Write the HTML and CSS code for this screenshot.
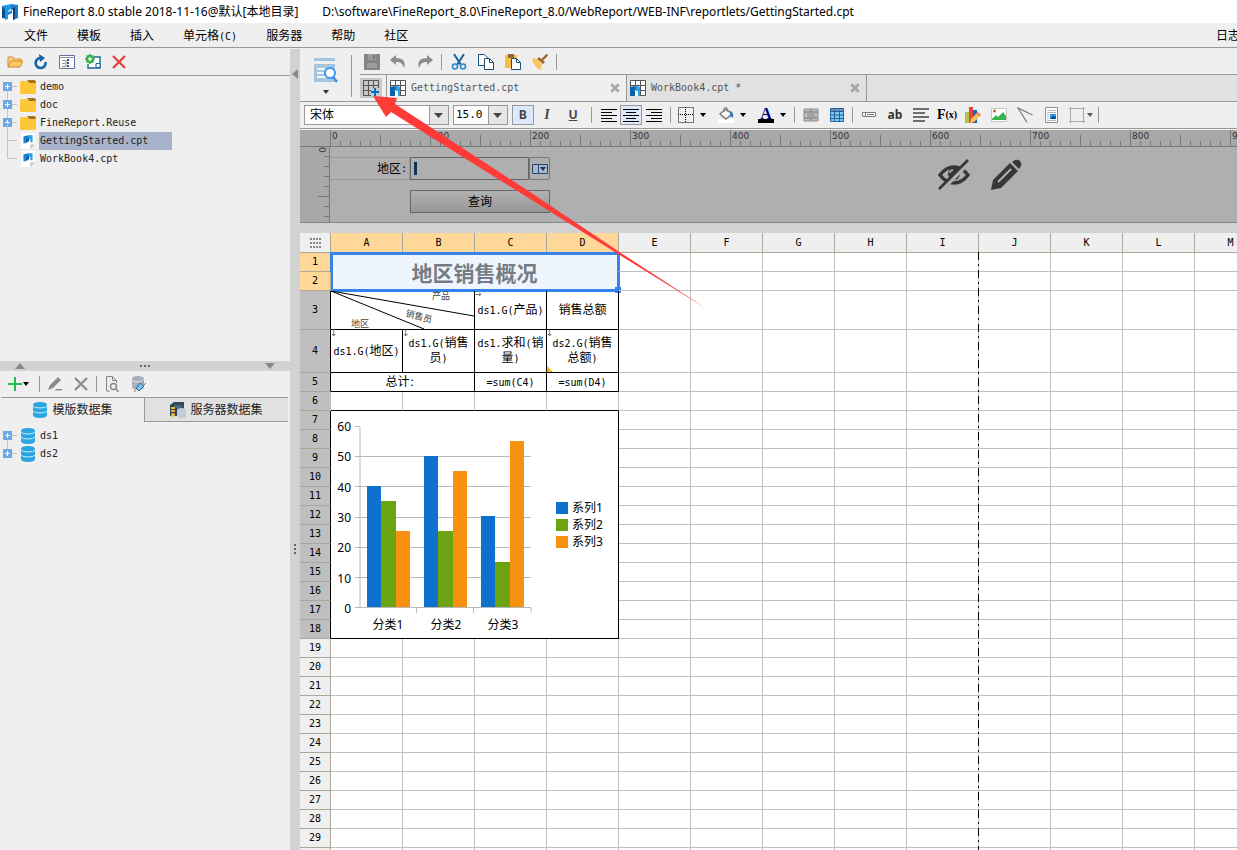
FILE: index.html
```html
<!DOCTYPE html>
<html lang="zh-CN">
<head>
<meta charset="utf-8">
<title>FineReport 8.0</title>
<link rel="stylesheet" href="styles.css">
</head>
<body>
<svg class="defs" aria-hidden="true">
  <defs>
    <symbol id="logo" viewBox="0 0 16 16"><path d="M0 2l6 1v12l-6-1z" fill="#0b4f92"/><path d="M0 2L9 0v5L6 7v8l-3 1V6z" fill="#2196e6"/><path d="M6 8l4-2v3l-4 2z" fill="#1a86d8"/><path d="M9 0l7 1v13l-5 2V5H9z" fill="#1c7fd0"/><path d="M9 5l4-2v12l-2 1V6z" fill="#0c4278"/></symbol>
    <symbol id="folder" viewBox="0 0 16 14"><path d="M0 2q0-1 1-1h6l2 2h7v10q0 1-1 1H1q-1 0-1-1z" fill="#ffc737"/><path d="M7 0h7q2 0 2 3H9z" fill="#a8741a"/></symbol>
    <symbol id="cpt" viewBox="0 0 12 14"><path d="M0 0h12v10l-4 4H0z" fill="#fff"/><path d="M8 14v-4h4z" fill="#c4c4c4"/><path d="M2 3l4-1v3L4 6v3H2z" fill="#1580d0"/><path d="M6 2h4v6H8V5H6z" fill="#2aa0e8"/><path d="M4 6l3-2v3L4 9z" fill="#0a58a0"/></symbol>
    <symbol id="db" viewBox="0 0 16 16"><path d="M1 3q0-3 7-3t7 3v10q0 3-7 3t-7-3z" fill="#29a5e0"/><path d="M1 4q1 2 7 2t7-2M1 9q1 2 7 2t7-2" fill="none" stroke="#c9ecfb"/></symbol>
    <symbol id="book" viewBox="0 0 16 16"><path d="M.5.5h15v15H.5z" fill="#fff" stroke="#555"/><path d="M5.500.5v6M10.500.5v15M.5 5.500h15M10 10.500h5" stroke="#555"/><path d="M0 7l5-1h3v4H5v6H0z" fill="#0b63ab"/><path d="M4 6h4q2 0 2 2v8H8v-5H6V8z" fill="#31a4df"/><path d="M5 11h3v5H5z" fill="#fff"/></symbol>
    <symbol id="close" viewBox="0 0 8 8"><path d="M1 1l6 6M7 1L1 7" stroke="#a6a6a6" stroke-width="2"/></symbol>
    <symbol id="down" viewBox="0 0 6 4"><path d="M0 0h6L3 4z"/></symbol>
  </defs>
</svg>

<header class="titlebar">
  <svg class="i16"><use href="#logo"/></svg>
  <span class="title">FineReport 8.0 stable 2018-11-16@默认[本地目录]</span>
  <span class="path">D:\software\FineReport_8.0\FineReport_8.0/WebReport/WEB-INF\reportlets/GettingStarted.cpt</span>
</header>
<nav class="menubar">
  <a href="#">文件</a><a href="#">模板</a><a href="#">插入</a><a href="#">单元格<span class="lat">(C)</span></a><a href="#">服务器</a><a href="#">帮助</a><a href="#">社区</a><a href="#" class="log">日志</a>
</nav>

<main class="workspace">
  <aside class="side">
    <div class="sidebar-tools" role="toolbar">
      <button aria-label="打开"><svg class="i16" viewBox="0 0 16 16"><path d="M1 13V3h5l1 2h7v2" fill="#fbd27c" stroke="#d28a2c"/><path d="M1 13l3-6h12l-3 6z" fill="#fcc765" stroke="#d28a2c"/></svg></button>
      <button aria-label="刷新"><svg class="i16" viewBox="0 0 16 16"><path d="M12.500 8a5 5 0 1 1-5-4" fill="none" stroke="#1263a8" stroke-width="2.600"/><path d="M6 0l6 4-5 4z" fill="#1263a8"/></svg></button>
      <button aria-label="目录"><svg class="i16" viewBox="0 0 16 16"><path d="M.5 1.500h15v13H.5z" fill="#fff" stroke="#6a6aa8"/><path d="M0 3.500h16" stroke="#8c8cc0"/><path d="M3 6.500h3M3 9.500h3M3 12.500h3M7 6v7" stroke="#888"/><path d="M8 5h2v2H8zM8 8h2v2H8zM8 11h2v2H8z" fill="#235a9a"/></svg></button>
      <button aria-label="设置"><svg class="i16" viewBox="0 0 16 16"><path d="M9 3h6v11H3v-4" fill="#fff" stroke="#176a98" stroke-width="1.400"/><path d="M11 9.500h4v4h-4z" fill="#fff" stroke="#176a98"/><circle cx="5" cy="5" r="3" fill="#fff" stroke="#39b24a" stroke-width="2.600"/><path d="M5 0v2M5 8v2M0 5h2M8 5h2M1.500 1.500L3 3M7 7l1.500 1.500M8.500 1.500L7 3M3 7L1.500 8.500" stroke="#39b24a" stroke-width="1.600"/></svg></button>
      <button aria-label="删除"><svg class="i16" viewBox="0 0 16 16"><path d="M2 2l12 12M14 2L2 14" stroke="#e8453c" stroke-width="2.400"/></svg></button>
    </div>
    <ul class="tree files">
      <li><i class="plus"></i><svg class="i16"><use href="#folder"/></svg><span class="lat">demo</span></li>
      <li><i class="plus"></i><svg class="i16"><use href="#folder"/></svg><span class="lat">doc</span></li>
      <li><i class="plus"></i><svg class="i16"><use href="#folder"/></svg><span class="lat">FineReport.Reuse</span></li>
      <li><i class="twig"></i><svg class="i16"><use href="#cpt"/></svg><span class="lat picked">GettingStarted.cpt</span></li>
      <li><i class="twig"></i><svg class="i16"><use href="#cpt"/></svg><span class="lat">WorkBook4.cpt</span></li>
    </ul>
    <div class="hsplit">
      <svg class="grip" viewBox="0 0 10 6"><path d="M0 6h10L5 0z" fill="#888"/></svg>
      <svg class="grip" viewBox="0 0 10 6"><path d="M0 2h2v2H0zM4 2h2v2H4zM8 2h2v2H8z" fill="#666"/></svg>
      <svg class="grip" viewBox="0 0 10 6"><path d="M0 0h10L5 6z" fill="#888"/></svg>
    </div>
    <div class="data-tools" role="toolbar">
      <button class="add" aria-label="新增"><svg class="i16" viewBox="0 0 16 16"><path d="M8 1v14M1 8h14" stroke="#1fbf53" stroke-width="2"/></svg><svg class="caret"><use href="#down"/></svg></button>
      <span class="sep"></span>
      <button aria-label="编辑"><svg class="i16" viewBox="0 0 16 16"><path d="M1 14l2-5 8-8 3 3-8 8zM9 13h6v1.500H8z" fill="#8c8c8c"/></svg></button>
      <button aria-label="移除"><svg class="i16" viewBox="0 0 16 16"><path d="M2 2l12 12M14 2L2 14" stroke="#8c8c8c" stroke-width="2.400"/></svg></button>
      <span class="sep"></span>
      <button aria-label="预览数据"><svg class="i16" viewBox="0 0 16 16"><path d="M6 15H2.500V.5h6l4 4V7M8.500.5v4h4" fill="none" stroke="#858585"/><circle cx="9.500" cy="10.500" r="3" fill="none" stroke="#858585" stroke-width="1.400"/><path d="M12 13l2.500 3" stroke="#858585" stroke-width="1.600"/></svg></button>
      <button aria-label="连接"><svg class="i16" viewBox="0 0 16 16"><path d="M2 3q0-3 6-3t6 3v8q0 3-6 3t-6-3z" fill="#a9b2ba"/><path d="M2 4q1 2 6 2t6-2" fill="none" stroke="#dde2e6"/><path d="M6 12l4-5 4 3-5 5z" fill="#7fc0ea" stroke="#2e6ea6"/><path d="M12 7l2-2M14 9l2-2M6 14l-2 2" stroke="#777"/></svg></button>
    </div>
    <div class="data-tabs" role="tablist">
      <button role="tab" aria-selected="true"><svg class="i16"><use href="#db"/></svg>模版数据集</button>
      <button role="tab" aria-selected="false"><svg class="i16" viewBox="0 0 16 16"><path d="M0 3l4-3h10v14H0z" fill="#31485a"/><path d="M4 3h8v3H4z" fill="#466680"/><path d="M1 5h4v2H1zM1 8h4v2H1z" fill="#f2b632"/><circle cx="3" cy="13" r="2" fill="#f2b632"/><path d="M7 8q0-2 4.500-2T16 8v6q0 2-4.500 2T7 14z" fill="#c3ccd4"/></svg>服务器数据集</button>
    </div>
    <ul class="tree sets">
      <li><i class="plus"></i><svg class="i16"><use href="#db"/></svg><span class="lat">ds1</span></li>
      <li><i class="plus"></i><svg class="i16"><use href="#db"/></svg><span class="lat">ds2</span></li>
    </ul>
  </aside>

  <div class="vsplit">
    <svg class="fold" viewBox="0 0 6 10"><path d="M6 0v10L0 5z" fill="#888"/></svg>
    <svg class="dots" viewBox="0 0 2 10"><path d="M0 0h2v2H0zM0 4h2v2H0zM0 8h2v2H0z" fill="#666"/></svg>
  </div>

  <section class="editor">
    <div class="top">
      <button class="preview" aria-label="预览">
        <svg class="i24" viewBox="0 0 24 24"><path d="M0 0h21v3H0zM0 6h21v18H0z" fill="#a5c4de"/><path d="M3 11h8M3 15h7M3 19h10" stroke="#f2f6fa" stroke-width="2"/><circle cx="16" cy="15" r="5" fill="#fff" stroke="#3e97ee" stroke-width="2"/><path d="M19 19l4 5" stroke="#3e97ee" stroke-width="2.600"/></svg>
        <svg class="caret"><use href="#down"/></svg>
      </button>
      <div class="top-main">
        <div class="actions" role="toolbar">
          <button aria-label="保存"><svg class="i16" viewBox="0 0 16 16"><path d="M0 1q0-1 1-1h14q1 0 1 1v14q0 1-1 1H1q-1 0-1-1z" fill="#858585"/><path d="M4 0h8v6H4z" fill="#9d9d9d"/><path d="M9 1h2v4H9z" fill="#707070"/><path d="M3 9h10v5H3z" fill="#9d9d9d"/></svg></button>
          <button aria-label="撤销"><svg class="i16" viewBox="0 0 16 16"><path d="M6 1L0 6l6 5V8q6-1 8 6 3-10-8-10z" fill="#8c8c8c"/></svg></button>
          <button aria-label="重做"><svg class="i16" viewBox="0 0 16 16"><path d="M10 1l6 5-6 5V8q-6-1-8 6-3-10 8-10z" fill="#8c8c8c"/></svg></button>
          <span class="sep"></span>
          <button aria-label="剪切"><svg class="i16" viewBox="0 0 16 16"><path d="M3 0l7 11M13 0L6 11" stroke="#16609c" stroke-width="2"/><circle cx="4" cy="12.500" r="2.500" fill="none" stroke="#2c8ac8" stroke-width="1.600"/><circle cx="12" cy="12.500" r="2.500" fill="none" stroke="#2c8ac8" stroke-width="1.600"/></svg></button>
          <button aria-label="复制"><svg class="i16" viewBox="0 0 16 16"><path d="M.5.5h6l3 3v8h-9z" fill="#fff" stroke="#1c4f78"/><path d="M6.500 4.500h5l4 4v7h-9z" fill="#fff" stroke="#1c4f78"/><path d="M11.500 4.500v4h4" fill="none" stroke="#1c4f78"/></svg></button>
          <button aria-label="粘贴"><svg class="i16" viewBox="0 0 16 16"><path d="M0 1h12v13H0z" fill="#f5bd49"/><path d="M3 0h6v4H3z" fill="#8b6a38"/><path d="M6.500 4.500h5l4 4v7h-9z" fill="#fff" stroke="#1c4f78"/><path d="M11.500 4.500v4h4" fill="none" stroke="#1c4f78"/></svg></button>
          <button aria-label="格式刷"><svg class="i16" viewBox="0 0 16 16"><path d="M15.500.5L10 6" stroke="#9b6534" stroke-width="2.400"/><path d="M7 3l6 5-2 2-6-5z" fill="#9b6534"/><path d="M0 4l5 1 5 5-1 6q-7-2-9-12z" fill="#fdc55e"/></svg></button>
          <span class="sep"></span>
        </div>
        <div class="filebar">
          <button class="new" aria-label="新建"><svg class="i16" viewBox="0 0 16 16"><path d="M.5.5h15v15H.5zM5.500 0v16M10.500 0v16M0 5.500h16M0 10.500h16" fill="none" stroke="#555"/><path d="M8 8h8v8H8z" fill="#c8c8c8"/><path d="M12 8v8M8 12h8" stroke="#0c6fbe" stroke-width="2"/></svg></button>
          <div class="file active"><svg class="i16"><use href="#book"/></svg><span class="lat">GettingStarted.cpt</span><button aria-label="关闭"><svg class="i8"><use href="#close"/></svg></button></div>
          <div class="file"><svg class="i16"><use href="#book"/></svg><span class="lat">WorkBook4.cpt *</span><button aria-label="关闭"><svg class="i8"><use href="#close"/></svg></button></div>
          <div class="file-rest"></div>
        </div>
      </div>
    </div>

    <div class="format" role="toolbar">
      <select class="face" aria-label="字体"><option>宋体</option></select>
      <select class="size" aria-label="字号"><option>15.0</option></select>
      <button class="on bold" aria-label="加粗">B</button>
      <button class="wide italic" aria-label="斜体">I</button>
      <button class="wide under" aria-label="下划线">U</button>
      <span class="sep"></span>
      <button aria-label="左对齐"><svg class="i16" viewBox="0 0 16 16"><path d="M0 2.500h16M0 5.500h11M0 8.500h16M0 11.500h11M0 14.500h16" stroke="#000"/></svg></button>
      <button class="on" aria-label="居中"><svg class="i16" viewBox="0 0 16 16"><path d="M0 2.500h16M3 5.500h10M0 8.500h16M3 11.500h10M0 14.500h16" stroke="#000"/></svg></button>
      <button aria-label="右对齐"><svg class="i16" viewBox="0 0 16 16"><path d="M0 2.500h16M5 5.500h11M0 8.500h16M5 11.500h11M0 14.500h16" stroke="#000"/></svg></button>
      <span class="sep"></span>
      <button class="split" aria-label="边框"><svg class="i16" viewBox="0 0 16 16"><path d="M.5.5h15v15H.5zM7.500 0v16M0 7.500h16" fill="none" stroke="#000" stroke-dasharray="1 1"/></svg><svg class="caret"><use href="#down"/></svg></button>
      <button class="split" aria-label="填充"><svg class="i16" viewBox="0 0 16 16"><path d="M0 12h16v4H0z" fill="#fff"/><path d="M2 7l6-5 6 5-6 5z" fill="#fff" stroke="#777" stroke-width="1.400"/><path d="M6 5V1q2-2 3 0v4" fill="none" stroke="#777"/><path d="M12 4q4 1 3 7l-3-2z" fill="#3a78b5"/></svg><svg class="caret"><use href="#down"/></svg></button>
      <button class="split ink-color" aria-label="字体颜色"><span class="glyph">A</span><svg class="caret"><use href="#down"/></svg></button>
      <span class="sep tight"></span>
      <button class="wide" aria-label="合并单元格"><svg class="i16" viewBox="0 0 16 16"><path d="M1 2h14v12H1z" fill="#bdbdbd" stroke="#8e8e8e"/><path d="M1 5h14M1 11h14M8 2v3M8 11v3" stroke="#777"/><path d="M4 6h8v4H4z" fill="#a5a5a5"/></svg></button>
      <button class="wide" aria-label="拆分单元格"><svg class="i16" viewBox="0 0 16 16"><path d="M1.500 1.500h13v13h-13z" fill="#7cc9f4" stroke="#22639c"/><path d="M2 2h12v2H2z" fill="#6f91b5"/><path d="M1 4.500h14M1 8h14M1 11.500h14M5.500 3v12M10.500 3v12" stroke="#22639c"/></svg></button>
      <span class="sep tight"></span>
      <button class="wide" aria-label="控件"><svg class="i16" viewBox="0 0 16 16"><path d="M1.500 5.500h13v4h-13z" fill="#fff" stroke="#777"/><path d="M6 7.500h7M4.500 6v3" stroke="#777"/></svg></button>
      <button class="wide ab" aria-label="文本">ab</button>
      <button class="wide" aria-label="富文本"><svg class="i16" viewBox="0 0 16 16"><path d="M0 2h16M0 6h12M0 10h16M0 14h12" stroke="#444" stroke-width="1.600"/></svg></button>
      <button class="wide fx" aria-label="公式">F<small>(x)</small></button>
      <button class="wide" aria-label="图表"><svg class="i16" viewBox="0 0 16 16"><path d="M0 5h4v11H0z" fill="#a9c84a"/><path d="M4 0h4v16H4z" fill="#e8453c"/><path d="M8 3h4v13H8z" fill="#1566ae"/><path d="M6 12l7-7 3 3-7 7-4 1z" fill="#fcc25a"/><path d="M13 5l3 3-2 1-3-2z" fill="#ef7b67"/></svg></button>
      <button class="wide" aria-label="图片"><svg class="i16" viewBox="0 0 16 16"><path d="M.5 1.500h15v13H.5z" fill="#fff" stroke="#c6c6c6"/><path d="M1 12l4-4 2 2 5-5 3 4v4H1z" fill="#37b34f"/><path d="M2 4h3M3.500 2.500v3" stroke="#e34b31" stroke-width="1.400"/></svg></button>
      <button class="wide" aria-label="斜线"><svg class="i16" viewBox="0 0 16 16"><path d="M15.500 8L1 1l9 14.500" fill="none" stroke="#777" stroke-width="1.200"/></svg></button>
      <button class="wide" aria-label="子报表"><svg class="i16" viewBox="0 0 16 16"><path d="M2.500.5h12v15h-12z" fill="#fff" stroke="#8f8f8f"/><path d="M4 3.500h9M4 5.500h9M4 7.500h2M4 9.500h2M4 11.500h2M4 13.500h9" stroke="#b9b9b9"/><path d="M7 7h6v5H7z" fill="#2b93e8"/><path d="M7 12l3-3 3 1v2z" fill="#0b4d94"/></svg></button>
      <button class="last" aria-label="悬浮元素"><svg class="i16" viewBox="0 0 16 16"><path d="M1.500 0v16M14.500 0v16M0 1.500h16M0 14.500h16" stroke="#a9a9a9"/></svg><svg class="caret"><use href="#down"/></svg></button>
      <span class="sep tight"></span>
    </div>

    <div class="params">
      <div class="ruler">
        <span>0</span><span>100</span><span>200</span><span>300</span><span>400</span><span>500</span><span>600</span><span>700</span><span>800</span><span>900</span>
      </div>
      <div class="vruler"><span>0</span></div>
      <form class="query">
        <label for="area">地区<span class="lat">:</span></label>
        <div class="combo"><input id="area" type="text"><button type="button" aria-label="展开"><svg class="drop" viewBox="0 0 16 10"><path d="M.5.5h15v9H.5z" fill="#aab8cc" stroke="#2c4470"/><path d="M6.500.5v9" stroke="#2c4470"/><path d="M8 3h6l-3 4z" fill="#1c3568"/></svg></button></div>
        <button type="button" class="search">查询</button>
      </form>
      <div class="param-icons">
        <button aria-label="隐藏"><svg class="i32" viewBox="0 0 32 32"><path d="M2 16q6-8 14-8t14 8q-6 8-14 8T2 16z" fill="none" stroke="#3a3636" stroke-width="3.400"/><circle cx="16" cy="15" r="6" fill="#3a3636"/><path d="M12 14q0-3 3-3" fill="none" stroke="#afafaf" stroke-width="1.600"/><path d="M3 31L31 3" stroke="#afafaf" stroke-width="5"/><path d="M1 30L30 1" stroke="#3a3636" stroke-width="2.600"/></svg></button>
        <button aria-label="编辑"><svg class="i32" viewBox="0 0 32 32"><path d="M1 31l2-10L20 4l8 8-17 17zM22 3l3-2q3-1 5 1t1 5l-2 3z" fill="#3a3636"/><path d="M8 23L21 10" stroke="#afafaf" stroke-width="2"/></svg></button>
      </div>
    </div>

    <div class="sheet">
      <table>
        <colgroup><col class="num"><col span="13"></colgroup>
        <thead><tr><th aria-label="全选"><svg class="corner" viewBox="0 0 11 10"><path d="M0 0h2v2H0zM3 0h2v2H3zM6 0h2v2H6zM9 0h2v2H9zM0 4h2v2H0zM3 4h2v2H3zM6 4h2v2H6zM9 4h2v2H9zM0 8h2v2H0zM3 8h2v2H3zM6 8h2v2H6zM9 8h2v2H9z" fill="#888"/></svg></th><th class="hot">A</th><th class="hot">B</th><th class="hot">C</th><th class="hot">D</th><th>E</th><th>F</th><th>G</th><th>H</th><th>I</th><th>J</th><th>K</th><th>L</th><th>M</th></tr></thead>
        <tbody id="rows">
          <tr data-blank="9"><th class="hot">1</th><td class="headline" colspan="4" rowspan="2">地区销售概况<i class="select-box"></i></td></tr>
          <tr data-blank="9"><th class="hot">2</th></tr>
          <tr class="r3" data-blank="9"><th class="used">3</th>
            <td class="ink diag" colspan="2"><svg viewBox="0 0 143 38"><path d="M0 0l143 25M0 0l93 38" stroke="#000"/><text x="101" y="8">产品</text><text x="74" y="25" transform="rotate(15 74 25)">销售员</text><text x="20" y="36">地区</text></svg></td>
            <td class="ink"><i class="mark">→</i><span class="lat">ds1.G(</span>产品<span class="lat">)</span></td><td class="ink">销售总额</td></tr>
          <tr class="r4" data-blank="9"><th class="used">4</th>
            <td class="ink"><i class="mark">↓</i><span class="lat">ds1.G(</span>地区<span class="lat">)</span></td>
            <td class="ink"><i class="mark">↓</i><span class="lat">ds1.G(</span>销售<br>员<span class="lat">)</span></td>
            <td class="ink"><span class="lat">ds1.</span>求和<span class="lat">(</span>销<br>量<span class="lat">)</span></td>
            <td class="ink flag"><i class="mark">↓</i><span class="lat">ds2.G(</span>销售<br>总额<span class="lat">)</span></td></tr>
          <tr data-blank="9"><th class="used">5</th><td class="ink" colspan="2">总计<span class="lat">：</span></td><td class="ink"><span class="lat">=sum(C4)</span></td><td class="ink"><span class="lat">=sum(D4)</span></td></tr>
          <tr class="r6" data-blank="13"><th class="used">6</th></tr>
          <tr data-blank="9"><th class="used">7</th>
            <td class="ink chart" colspan="4" rowspan="12">
              <svg viewBox="0 0 287 227" role="img" aria-label="柱形图">
                <path d="M28 45.500h172M28 75.500h172M28 106.500h172M28 136.500h172M28 166.500h172M24 15.500h5v181M24 45.500h5M24 75.500h5M24 106.500h5M24 136.500h5M24 166.500h5M24 196.500h176v5M85.500 197v5M142.500 197v5" fill="none" stroke="#b8b8b8"/>
                <g fill="#0e71cd"><path d="M36 75h14v121H36zM93 45h14v151H93zM150 105h14v91h-14z"/></g>
                <g fill="#6ca411"><path d="M50 90h15v106H50zM107 120h15v76h-15zM164 151h15v45h-15z"/></g>
                <g fill="#f6920f"><path d="M65 120h14v76H65zM122 60h14v136h-14zM179 30h14v166h-14z"/></g>
                <g text-anchor="end"><text x="20" y="20">60</text><text x="20" y="50">50</text><text x="20" y="81">40</text><text x="20" y="111">30</text><text x="20" y="141">20</text><text x="20" y="172">10</text><text x="20" y="202">0</text></g>
                <g text-anchor="middle"><text x="57" y="218">分类1</text><text x="115" y="218">分类2</text><text x="172" y="218">分类3</text></g>
                <path d="M225 91h12v12h-12z" fill="#0e71cd"/><path d="M225 108h12v12h-12z" fill="#6ca411"/><path d="M225 125h12v12h-12z" fill="#f6920f"/>
                <text x="241" y="101">系列1</text><text x="241" y="118">系列2</text><text x="241" y="135">系列3</text>
              </svg>
            </td></tr>
        </tbody>
      </table>
      <div class="page-edge"></div>
    </div>
  </section>
</main>

<svg class="pointer" viewBox="0 0 335 215" aria-hidden="true"><path d="M0 1l24 2-2 6 135 88 88 59 89 58-89-55-88-55L18 17l-5 5z" fill="#ff3b38"/></svg>
<script src="sheet.js"></script>
</body>
</html>
```
FILE: styles.css
```css
* { box-sizing: border-box; }
body {
  margin: 0;
  height: 100vh;
  display: flex;
  flex-direction: column;
  overflow: hidden;
  position: relative;
  background: #efefef;
  color: #000;
  font: 12px/16px "Liberation Sans", "Noto Sans CJK SC", sans-serif;
}
button, input, select { font: inherit; color: inherit; margin: 0; padding: 0; border: 0; background: none; border-radius: 0; }
button { display: flex; align-items: center; justify-content: center; }
svg { display: block; flex: none; }
i { font-style: normal; }
a { color: inherit; text-decoration: none; }
.defs { position: absolute; width: 0; height: 0; }
.lat { font: 10px/12px "DejaVu Sans Mono", "Noto Sans CJK SC", monospace; }
.i8 { width: 10px; height: 10px; }
.i16 { width: 16px; height: 16px; }
.i24 { width: 24px; height: 26px; }
.i32 { width: 32px; height: 32px; }
.caret { width: 6px; height: 4px; }
.sep { flex: none; width: 1px; height: 16px; background: #999; margin: 0 5px; }
.sep.tight { margin: 0 3px 0 2px; }

.titlebar { flex: none; height: 23px; display: flex; align-items: center; padding: 0 2px; background: #fff; font: 12px/16px "Noto Sans", "Noto Sans CJK SC", sans-serif; white-space: nowrap; }
.title { margin: 0 24px 0 5px; }
.menubar { flex: none; height: 25px; display: flex; align-items: center; gap: 29px; margin-bottom: 1px; padding: 2px 0 0 24px; border-bottom: 1px solid #999; }
.menubar a { white-space: nowrap; }
.menubar .log { margin: 0 -3px 0 auto; }

.workspace { flex: 1; min-height: 0; display: flex; }
.side { flex: none; width: 290px; display: flex; flex-direction: column; }
.sidebar-tools { flex: none; height: 27px; display: flex; align-items: center; padding-left: 2px; border-bottom: 1px solid #999; }
.sidebar-tools button { width: 26px; height: 24px; }
.tree { list-style: none; margin: 0; padding: 2px 0 0; }
.files { flex: none; height: 285px; }
.tree li { position: relative; height: 18px; display: flex; align-items: center; padding-left: 20px; color: #222; }
.tree li .lat { margin-left: 3px; line-height: 18px; padding: 0 24px 0 1px; }
.tree .picked { background: #a8b4cb; }
.plus, .twig { position: absolute; left: 3px; top: 4px; width: 9px; height: 9px; }
.plus { background: linear-gradient(#fff, #fff) center / 5px 1px no-repeat, linear-gradient(#fff, #fff) center / 1px 5px no-repeat, #6fa9e3; }
.plus::after, .twig::after { content: ""; position: absolute; left: 9px; top: 4px; width: 5px; height: 1px; background: #c9c4b4; }
.twig::after { left: 4px; width: 10px; }
.plus::before, .twig::before { content: ""; position: absolute; left: 4px; top: -9px; width: 1px; height: 9px; background: #c9c4b4; }
.twig::before { top: -13px; height: 18px; }
.tree li:first-child .plus::before { display: none; }
.hsplit { flex: none; height: 10px; display: flex; align-items: center; justify-content: space-between; padding: 0 15px; background: #d2d2d2; }
.grip { width: 10px; height: 6px; }
.data-tools { flex: none; height: 26px; display: flex; align-items: center; padding-left: 7px; }
.data-tools button { width: 26px; height: 24px; }
.data-tools .add { width: 30px; justify-content: flex-start; }
.data-tools .sep { margin: 0 2px; }
.data-tabs { flex: none; height: 25px; display: flex; margin: 0 2px 0 1px; border-top: 1px solid #999; }
.data-tabs button { flex: 1; gap: 4px; color: #222; }
.data-tabs button + button { background: #e1e1e1; border: solid #999; border-width: 0 0 1px 1px; }
.sets { padding-top: 5px; }

.vsplit { flex: none; width: 10px; display: flex; flex-direction: column; align-items: center; background: #d2d2d2; }
.fold { width: 6px; height: 10px; margin-top: 20px; }
.dots { width: 2px; height: 10px; margin-top: 465px; }

.editor { flex: 1; min-width: 0; display: flex; flex-direction: column; }
.top { flex: none; height: 53px; display: flex; border-bottom: 1px solid #999; }
.preview { position: relative; width: 52px; flex-direction: column; gap: 7px; }
.preview::after { content: ""; position: absolute; right: 0; top: 6px; bottom: 4px; width: 1px; background: #999; }
.preview .caret { fill: #333; }
.top-main { flex: 1; min-width: 0; display: flex; flex-direction: column; margin-left: 8px; }
.actions { height: 26px; display: flex; align-items: center; border-bottom: 1px solid #999; }
.actions button { width: 27px; height: 24px; }
.actions button:first-child { width: 24px; }
.actions .sep { margin: 0 3px; }
.filebar { flex: 1; display: flex; align-items: stretch; }
.new { width: 22px; height: 20px; margin: 3px 4px 0 0; background: #c8c8c8; }
.file { flex: none; width: 240px; display: flex; align-items: center; padding: 0 6px 0 3px; background: #e1e1e1; border-left: 1px solid #999; }
.file.active { background: #efefef; }
.file .lat { flex: 1; margin-left: 5px; color: #555; }
.file-rest { flex: 1; background: #e1e1e1; border-left: 1px solid #999; }

.format { flex: none; height: 27px; display: flex; align-items: center; padding-left: 4px; border-bottom: 1px solid #999; }
.format select { flex: none; height: 20px; margin-right: 4px; padding-left: 5px; border: 1px solid #999; appearance: none;
  background: #fff url("data:image/svg+xml,%3Csvg xmlns='http://www.w3.org/2000/svg' width='19' height='18'%3E%3Cpath d='M0 0h19v18H0z' fill='%23e6e6e6'/%3E%3Cpath d='M.5 0v18' stroke='%23999'/%3E%3Cpath d='M5 7h9l-4.500 5z' fill='%23444'/%3E%3C/svg%3E") right / 19px 18px no-repeat; }
.format .face { width: 145px; }
.format .size { width: 55px; padding-left: 2px; font: 11px/16px "DejaVu Sans Mono", monospace; }
.format button { flex: none; width: 23px; height: 20px; }
.format .wide { width: 26px; }
.format .on { width: 22px; border: 1px solid #999; background: #dce9fa; }
.format .bold { font: bold 13px/16px "DejaVu Sans Mono", monospace; color: #444; }
.format .italic { font: italic bold 14px/16px "Liberation Serif", serif; color: #444; }
.format .under { font: bold 12px/16px "Liberation Sans", sans-serif; color: #444; text-decoration: underline; }
.format .split { width: 40px; gap: 6px; justify-content: flex-start; padding-left: 2px; }
.format .ink-color { width: 36px; }
.glyph { width: 16px; height: 16px; border-bottom: 4px solid #000; font: bold 16px/13px "Liberation Serif", serif; color: #00007c; text-align: center; }
.format .ab { font: bold 12px/16px "Noto Sans", sans-serif; color: #333; }
.format .fx { font: bold 14px/16px "Liberation Serif", serif; }
.fx small { font-size: 10px; }
.format .last { width: 32px; justify-content: flex-start; padding-left: 5px; gap: 2px; }
.last .caret { fill: #555; }

.params { flex: none; height: 93px; display: grid; grid-template: 17px 1fr / 30px 1fr; position: relative; margin-top: 1px; border-bottom: 1px solid #858585; background: #afafaf; }
.ruler { grid-column: 1 / 3; display: flex; overflow: hidden; padding-left: 30px; border-bottom: 1px solid #777;
  background: repeating-linear-gradient(90deg, #777 0 1px, #0000 1px 100px) 30px 0 / 100% 100% no-repeat, repeating-linear-gradient(90deg, #777 0 1px, #0000 1px 50px) 30px 100% / 100% 11px no-repeat, repeating-linear-gradient(90deg, #777 0 1px, #0000 1px 10px) 30px 100% / 100% 5px no-repeat, #a8a8a8; }
.ruler span { flex: none; width: 100px; padding-left: 2px; font: 9px/13px "DejaVu Sans", sans-serif; color: #333; }
.vruler { border-right: 1px solid #777; background: repeating-linear-gradient(#0000 0 9px, #777 9px 10px) 100% 0 / 5px 100% no-repeat, linear-gradient(#777, #777) 100% 49px / 11px 1px no-repeat, #a8a8a8; }
.vruler span { display: block; width: 12px; margin-left: 13px; font: 9px/7px "DejaVu Sans", sans-serif; writing-mode: vertical-rl; color: #333; }
.query { display: grid; grid-template: 23px 23px / 80px 140px; gap: 10px 0; padding-top: 10px; }
.query label { display: flex; align-items: center; justify-content: flex-end; padding-right: 2px; border: 1px solid #999; border-left: 0; }
.combo { display: flex; }
.combo input { flex: 1; min-width: 0; border: 1px solid #666; background: linear-gradient(#10365e, #10365e) 3px 4px / 3px 13px no-repeat, #afafaf; }
.combo button { width: 21px; border: 1px solid #777; border-radius: 2px; }
.drop { width: 16px; height: 10px; }
.search { grid-column: 2; border: 1px solid #666; background: linear-gradient(#b2b2b2, #969696); }
.param-icons { position: absolute; left: 638px; top: 29px; display: flex; gap: 20px; }

.sheet { flex: 1; min-height: 0; position: relative; overflow: hidden; padding-top: 10px; background: #d2d2d2; }
.sheet table { width: 967px; table-layout: fixed; border-collapse: separate; border-spacing: 0; background: #fff; }
.sheet col { width: 72px; }
.sheet col.num { width: 31px; }
.sheet th, .sheet td { position: relative; height: 19px; padding: 0; border: solid #c0c0c0; border-width: 0 1px 1px 0; text-align: center; }
.sheet th { background: #efefef; border-color: #aca899; font: 10px/12px "DejaVu Sans Mono", monospace; }
.sheet thead th { height: 20px; }
.sheet .hot { background: #ffd798; }
.sheet .used { background: #bfbfbf; border-right-color: #000; }
.sheet .r6 .used { border-right-color: #c0c0c0; }
.sheet .r3 > * { height: 39px; }
.sheet .r4 > * { height: 43px; }
.sheet .ink { border-color: #000; line-height: 15px; white-space: nowrap; }
.sheet .ink .lat { line-height: 15px; }
.sheet .r6 td:nth-child(-n+5) { border-bottom-color: #000; }
.sheet .headline { background: #eef5fd; color: #777c84; font: bold 21px/24px "Noto Sans CJK SC", sans-serif; }
.select-box { position: absolute; inset: -1px -2px -2px -1px; border: 3px solid #3584ee; }
.select-box::after { content: ""; position: absolute; right: -4px; bottom: -4px; width: 6px; height: 6px; background: #3584ee; }
.diag svg { position: absolute; inset: 0; width: 143px; height: 38px; }
.diag text { font-size: 9px; fill: #444; }
.mark { position: absolute; left: -1px; top: -3px; font: 9px/12px "DejaVu Sans", sans-serif; color: #666; }
.flag::after { content: ""; position: absolute; left: 0; bottom: 0; border: solid #0000; border-width: 6px 0 0 6px; border-left-color: #fdb913; }
.corner { width: 11px; height: 10px; margin: 0 auto; }
.chart svg { position: absolute; inset: 0; width: 287px; height: 227px; }
.chart text { font: 12px "Noto Sans", "Noto Sans CJK SC", sans-serif; }
.page-edge { position: absolute; left: 678px; top: 29px; bottom: 0; width: 1px; background: repeating-linear-gradient(#000 0 8px, #c0c0c0 8px 12px, #000 12px 14px, #c0c0c0 14px 18px); }

.pointer { position: absolute; left: 373px; top: 95px; width: 335px; height: 215px; pointer-events: none; }
```
FILE: sheet.js
```js
const body = document.getElementById('rows');

for (let n = 8; n <= 30; n++) {
  const row = body.insertRow();
  row.dataset.blank = n <= 18 ? 9 : 13;
  const head = document.createElement('th');
  head.textContent = n;
  if (n <= 18) head.className = 'used';
  row.append(head);
}

for (const row of body.rows) {
  for (let i = 0; i < Number(row.dataset.blank); i++) row.insertCell();
}
```
